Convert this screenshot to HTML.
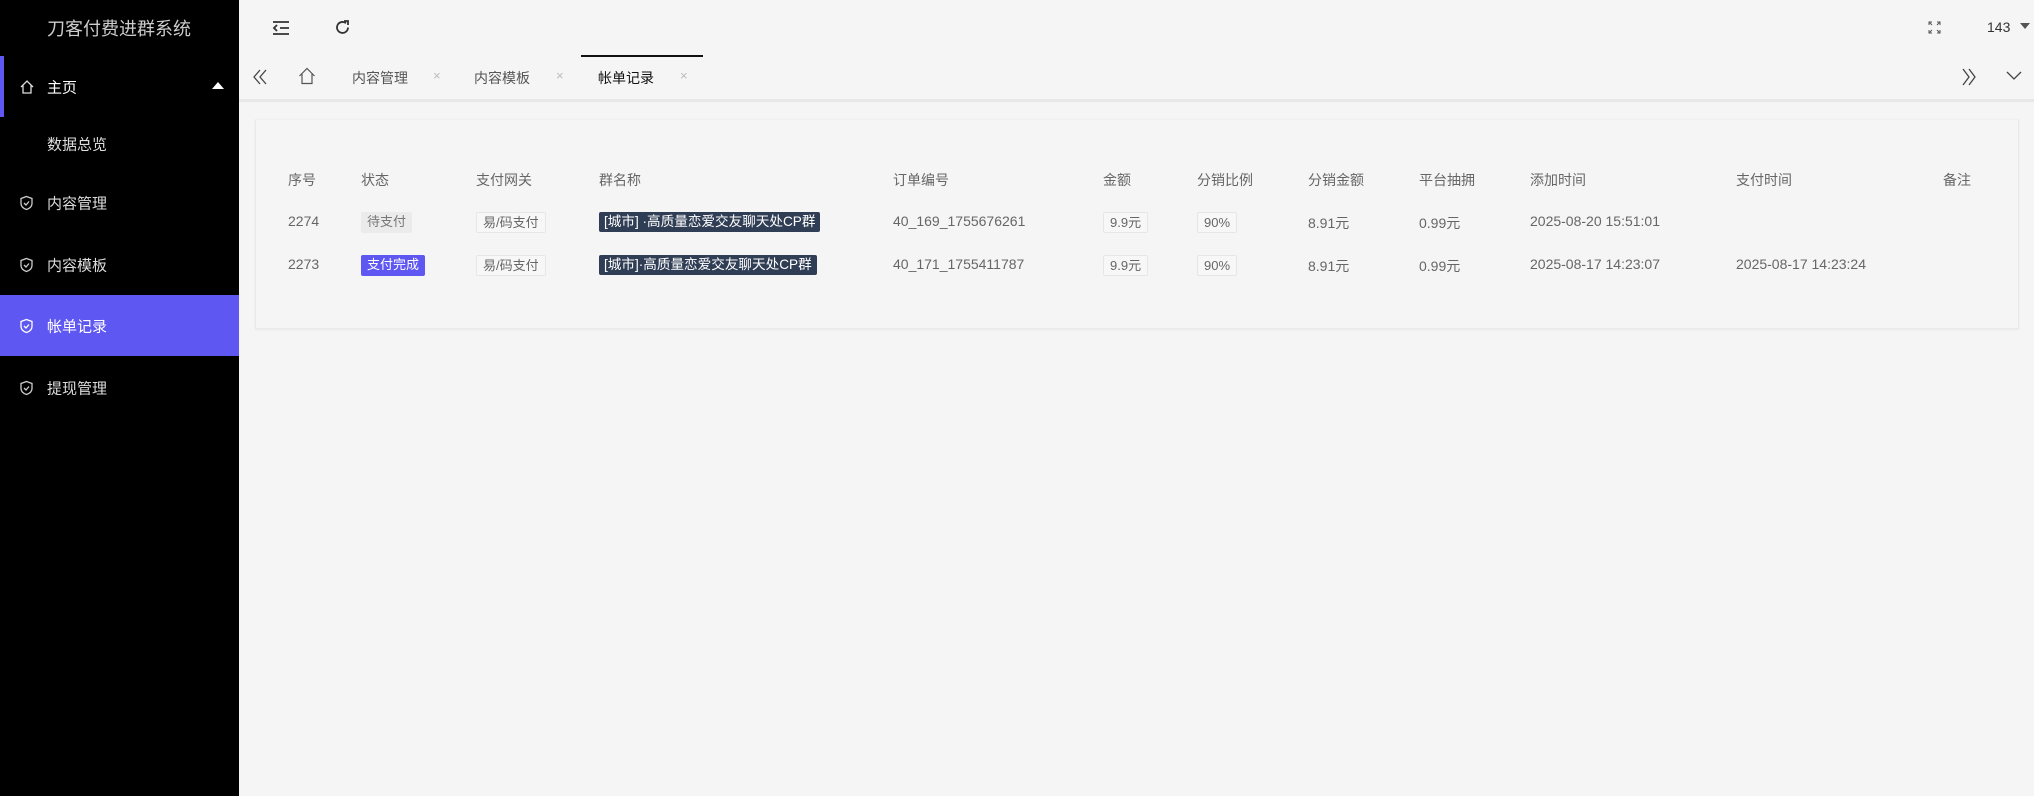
<!DOCTYPE html>
<html><head><meta charset="utf-8"><style>
*{margin:0;padding:0;box-sizing:border-box}
body{width:2034px;height:796px;background:#f5f5f5;font-family:"Liberation Sans","Noto Sans CJK SC",sans-serif;position:relative;overflow:hidden;color:#666}
.abs{position:absolute;white-space:nowrap}
#side{position:absolute;left:0;top:0;width:239px;height:796px;background:#000}
.mi{position:absolute;left:0;width:239px;height:61px;color:#ddd;font-size:15px}
.mi span{position:absolute;left:47px;top:50%;transform:translateY(-50%)}
.mi svg{position:absolute;left:19px;top:50%;transform:translateY(-50%)}
.th{position:absolute;top:170px;font-size:14px;color:#666}
.td{position:absolute;font-size:14px;color:#666;white-space:nowrap}
.tag{position:absolute;height:21px;line-height:19px;font-size:13px;padding:0 6px;border-radius:2px;white-space:nowrap}
.b{border:1px solid #e6e6e6;background:#f7f7f7;color:#666}
</style></head><body>
<div id="side">
<div class="abs" style="left:47px;top:15px;font-size:18px;color:#ccc">刀客付费进群系统</div>
<div class="mi" style="top:56px"><div style="position:absolute;left:0;top:0;width:4px;height:61px;background:#5f57f2"></div>
<svg width="16" height="16" viewBox="0 0 16 16"><path d="M2 8L8 2l6 6M4 6.5V14h8V6.5" fill="none" stroke="#ddd" stroke-width="1.3"/></svg><span style="color:#fff">主页</span>
<div style="position:absolute;left:212px;top:26px;border-left:6px solid transparent;border-right:6px solid transparent;border-bottom:7px solid #fff"></div></div>
<div class="mi" style="top:113px"><span>数据总览</span></div>
<div class="mi" style="top:172px"><svg width="15" height="16" viewBox="0 0 15 16"><path d="M7.5 1.5L13 3.5v5c0 3-2.5 5-5.5 6-3-1-5.5-3-5.5-6v-5z" fill="none" stroke="#ccc" stroke-width="1.3"/><path d="M5 8l2 2 3-3.5" fill="none" stroke="#ccc" stroke-width="1.3"/></svg><span>内容管理</span></div>
<div class="mi" style="top:234px"><svg width="15" height="16" viewBox="0 0 15 16"><path d="M7.5 1.5L13 3.5v5c0 3-2.5 5-5.5 6-3-1-5.5-3-5.5-6v-5z" fill="none" stroke="#ccc" stroke-width="1.3"/><path d="M5 8l2 2 3-3.5" fill="none" stroke="#ccc" stroke-width="1.3"/></svg><span>内容模板</span></div>
<div class="mi" style="top:295px;background:#5f57f2;color:#fff"><svg width="15" height="16" viewBox="0 0 15 16"><path d="M7.5 1.5L13 3.5v5c0 3-2.5 5-5.5 6-3-1-5.5-3-5.5-6v-5z" fill="none" stroke="#fff" stroke-width="1.3"/><path d="M5 8l2 2 3-3.5" fill="none" stroke="#fff" stroke-width="1.3"/></svg><span>帐单记录</span></div>
<div class="mi" style="top:357px"><svg width="15" height="16" viewBox="0 0 15 16"><path d="M7.5 1.5L13 3.5v5c0 3-2.5 5-5.5 6-3-1-5.5-3-5.5-6v-5z" fill="none" stroke="#ccc" stroke-width="1.3"/><path d="M5 8l2 2 3-3.5" fill="none" stroke="#ccc" stroke-width="1.3"/></svg><span>提现管理</span></div>
</div>
<svg class="abs" style="left:272px;top:20px" width="18" height="16" viewBox="0 0 18 16"><path d="M1 2h16M8 8h9M1 14h16M5 5L2 8l3 3" fill="none" stroke="#333" stroke-width="1.8"/></svg>
<svg class="abs" style="left:334px;top:19px" width="17" height="17" viewBox="0 0 17 17"><path d="M14 8.5A5.5 5.5 0 1 1 12 4.2" fill="none" stroke="#333" stroke-width="1.8"/><path d="M10 2h4v4" fill="none" stroke="#333" stroke-width="1.8"/></svg>
<svg class="abs" style="left:1928px;top:21px" width="13" height="13" viewBox="0 0 13 13"><path d="M1 4V1h3M9 1h3v3M12 9v3H9M4 12H1V9M1 1l3 3M12 1L9 4M12 12L9 9M1 12l3-3" fill="none" stroke="#555" stroke-width="1"/></svg>
<div class="abs" style="left:1987px;top:19px;font-size:14px;color:#333">143</div>
<div class="abs" style="left:2020px;top:23px;border-left:5px solid transparent;border-right:5px solid transparent;border-top:6px solid #555"></div>
<div class="abs" style="left:581px;top:55px;width:122px;height:2px;background:#111"></div>
<div class="abs" style="left:239px;top:99px;width:1795px;height:3px;background:#e8e8e8"></div>
<svg class="abs" style="left:252px;top:69px" width="18" height="16" viewBox="0 0 18 16"><path d="M8 1L2 8l6 7M14 1L8 8l6 7" fill="none" stroke="#444" stroke-width="1.3"/></svg>
<svg class="abs" style="left:298px;top:67px" width="18" height="18" viewBox="0 0 18 18"><path d="M1.5 9L9 1.5 16.5 9M4 7v9.5h10V7" fill="none" stroke="#555" stroke-width="1.2"/></svg>
<div class="abs" style="left:352px;top:68px;font-size:14px;color:#555">内容管理</div>
<div class="abs" style="left:433px;top:68px;font-size:13px;color:#bbb">×</div>
<div class="abs" style="left:474px;top:68px;font-size:14px;color:#555">内容模板</div>
<div class="abs" style="left:556px;top:68px;font-size:13px;color:#bbb">×</div>
<div class="abs" style="left:598px;top:68px;font-size:14px;color:#111">帐单记录</div>
<div class="abs" style="left:680px;top:68px;font-size:13px;color:#bbb">×</div>
<svg class="abs" style="left:1961px;top:68px" width="16" height="18" viewBox="0 0 16 18"><path d="M2 1l6 8-6 8M8 1l6 8-6 8" fill="none" stroke="#444" stroke-width="1.3"/></svg>
<svg class="abs" style="left:2006px;top:71px" width="16" height="10" viewBox="0 0 16 10"><path d="M1 1l7 7 7-7" fill="none" stroke="#444" stroke-width="1.3"/></svg>
<div class="abs" style="left:255px;top:119px;width:1764px;height:210px;border:1px solid #e9e9e9;border-top-color:#f0f0f0;box-shadow:0 1px 2px rgba(0,0,0,.05)"></div>
<div class="th" style="left:288px">序号</div><div class="th" style="left:361px">状态</div><div class="th" style="left:476px">支付网关</div><div class="th" style="left:599px">群名称</div><div class="th" style="left:893px">订单编号</div><div class="th" style="left:1103px">金额</div><div class="th" style="left:1197px">分销比例</div><div class="th" style="left:1308px">分销金额</div><div class="th" style="left:1419px">平台抽拥</div><div class="th" style="left:1530px">添加时间</div><div class="th" style="left:1736px">支付时间</div><div class="th" style="left:1943px">备注</div>

<div class="td" style="left:288px;top:213px">2274</div>
<div class="tag" style="left:361px;top:212px;background:#ebebeb;color:#777">待支付</div>
<div class="tag b" style="left:476px;top:212px">易/码支付</div>
<div class="tag" style="left:599px;top:212px;background:#2f3d55;color:#fff;height:20px;font-size:13.6px;padding:0 5px">[城市] ·高质量恋爱交友聊天处CP群</div>
<div class="td" style="left:893px;top:213px">40_169_1755676261</div>
<div class="tag b" style="left:1103px;top:212px">9.9元</div>
<div class="tag b" style="left:1197px;top:212px">90%</div>
<div class="td" style="left:1308px;top:213px">8.91元</div>
<div class="td" style="left:1419px;top:213px">0.99元</div>
<div class="td" style="left:1530px;top:213px">2025-08-20 15:51:01</div>

<div class="td" style="left:288px;top:256px">2273</div>
<div class="tag" style="left:361px;top:255px;background:#5f57f2;color:#fff">支付完成</div>
<div class="tag b" style="left:476px;top:255px">易/码支付</div>
<div class="tag" style="left:599px;top:255px;background:#2f3d55;color:#fff;height:20px;font-size:13.6px;padding:0 5px">[城市]·高质量恋爱交友聊天处CP群</div>
<div class="td" style="left:893px;top:256px">40_171_1755411787</div>
<div class="tag b" style="left:1103px;top:255px">9.9元</div>
<div class="tag b" style="left:1197px;top:255px">90%</div>
<div class="td" style="left:1308px;top:256px">8.91元</div>
<div class="td" style="left:1419px;top:256px">0.99元</div>
<div class="td" style="left:1530px;top:256px">2025-08-17 14:23:07</div>
<div class="td" style="left:1736px;top:256px">2025-08-17 14:23:24</div>
</body></html>
